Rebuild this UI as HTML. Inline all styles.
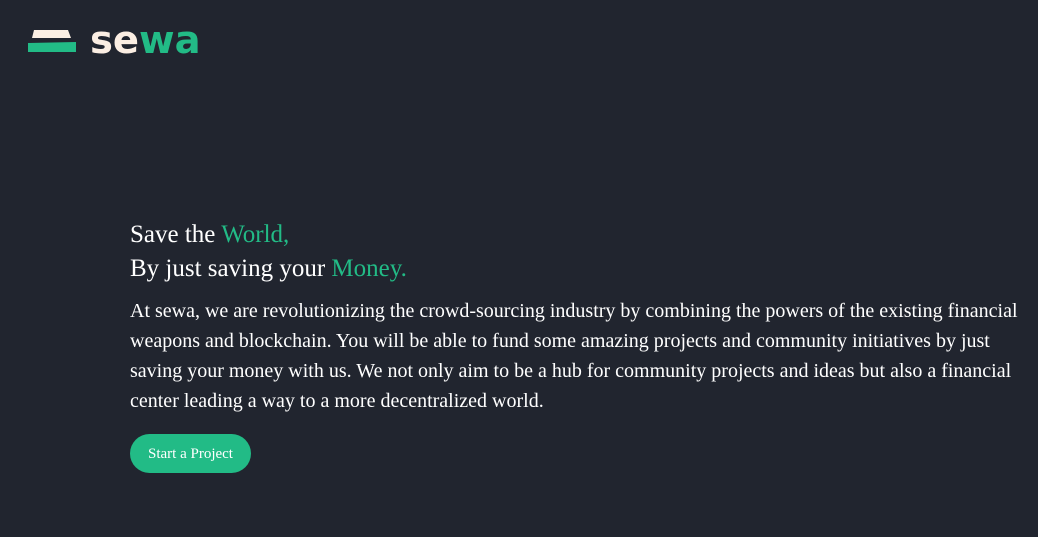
<!DOCTYPE html>
<html><head><style>
body{margin:0;width:1038px;height:537px;background:#21252f;overflow:hidden;font-family:"Liberation Serif",serif;color:#fff;position:relative}
.g{color:#22bb86}
.logo{position:absolute;left:28px;top:22px}
.word{position:absolute;left:90px;top:18px;font-family:"DejaVu Sans",sans-serif;font-weight:bold;font-size:38.5px;color:#fbeee3}
h1{position:absolute;left:130px;top:218px;margin:0;font-weight:normal;font-size:25px;line-height:34px}
p{position:absolute;left:130px;top:296px;margin:0;width:905px;font-size:20px;line-height:30px}
.btn{position:absolute;left:130px;top:434px;width:121px;height:39px;border-radius:20px;background:#22bb86;font-size:15px;line-height:41px;text-align:center;color:#fff}
</style></head><body>
<svg class="logo" width="50" height="32" viewBox="0 0 50 32"><polygon points="6,8 40,8 43,16 4,16" fill="#fbeee3"/><polygon points="0,21 48,20 48,30 0,30" fill="#22bb86"/></svg>
<div class="word">se<span class="g">wa</span></div>
<h1>Save the <span class="g">World,</span><br>By just saving your <span class="g">Money.</span></h1>
<p>At sewa, we are revolutionizing the crowd-sourcing industry by combining the powers of the existing financial weapons and blockchain. You will be able to fund some amazing projects and community initiatives by just saving your money with us. We not only aim to be a hub for community projects and ideas but also a financial center leading a way to a more decentralized world.</p>
<div class="btn">Start a Project</div>
</body></html>
